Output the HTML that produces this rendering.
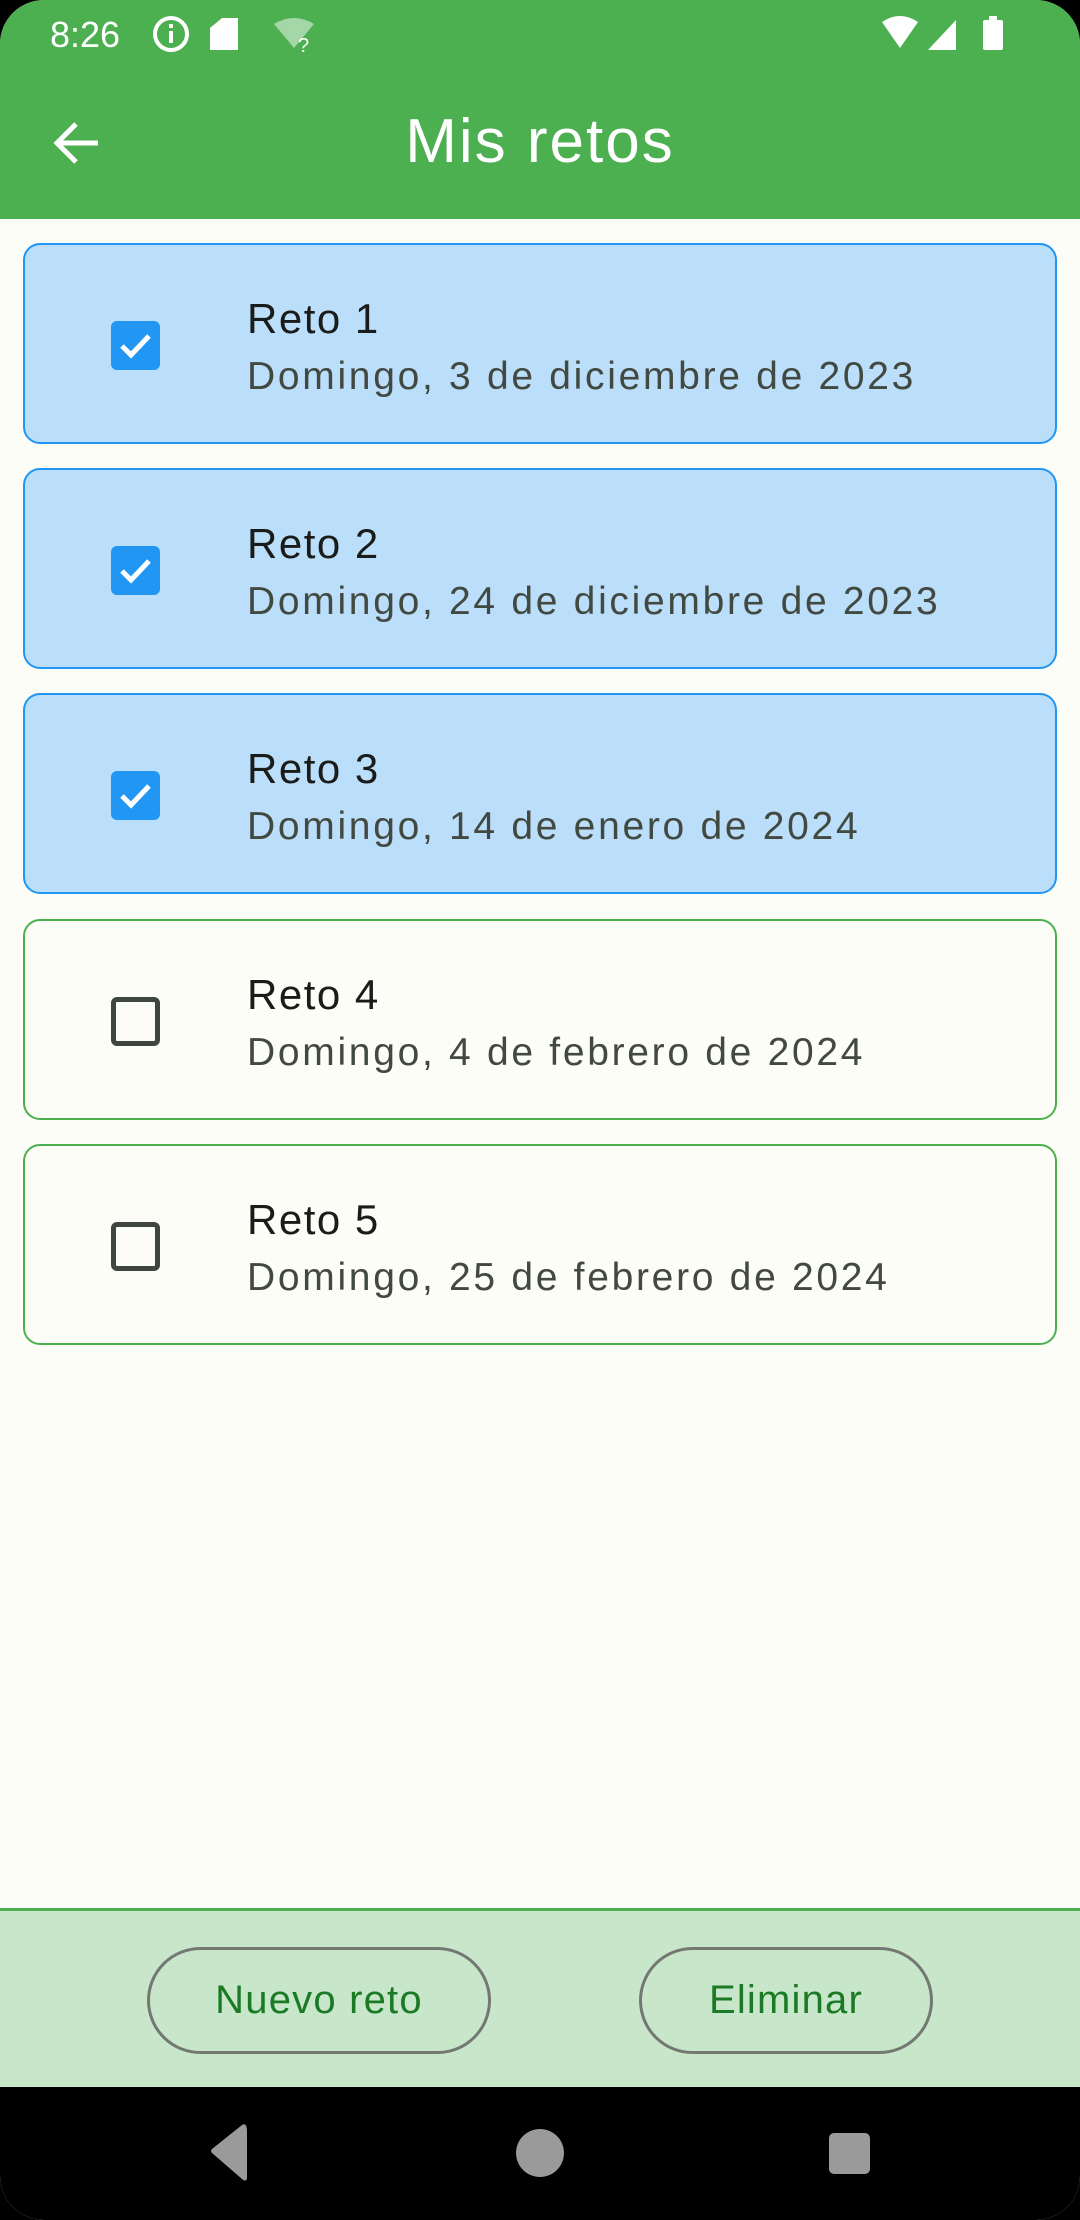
<!DOCTYPE html>
<html><head><meta charset="utf-8"><style>
*{margin:0;padding:0;box-sizing:border-box}
body{width:1080px;height:2220px;background:#000;font-family:"Liberation Sans",sans-serif;overflow:hidden;position:relative}
.screen{position:absolute;left:0;top:0;width:1080px;height:2220px;background:#fcfdf6;border-radius:44px;overflow:hidden}
.top{position:absolute;left:0;top:0;width:1080px;height:219px;background:#4caf50}
.time{position:absolute;left:50px;top:14px;color:#fff;font-size:36px}
.title{position:absolute;left:0;width:1080px;top:106px;text-align:center;color:#fff;font-size:62px;letter-spacing:2px}
.card{position:absolute;left:23px;width:1034px;height:201px;border-radius:17px;border:2px solid #4caf50;background:#fcfdf6}
.card.sel{background:#bbdefb;border-color:#2196f3}
.cb{position:absolute;left:86px;top:76px;width:49px;height:49px;border-radius:6px;border:5px solid #3f4540}
.sel .cb{background:#2196f3;border-color:#2196f3}
.t1{position:absolute;left:222px;top:50px;font-size:42px;color:#1a1c19;letter-spacing:1.5px}
.t2{position:absolute;left:222px;top:110px;font-size:39px;color:#424940;letter-spacing:2.7px}
.bottom{position:absolute;left:0;top:1908px;width:1080px;height:179px;background:#c8e6c9;border-top:3px solid #4caf50}
.btn{position:absolute;top:36px;height:107px;border:3px solid #737873;border-radius:54px;color:#1b7a26;font-size:40px;display:flex;align-items:center;justify-content:center;letter-spacing:1.2px}
.nav{position:absolute;left:0;top:2087px;width:1080px;height:133px;background:#000}
</style></head><body>
<div class="screen">
<div class="top">
 <div class="time">8:26</div>
 <svg style="position:absolute;left:150px;top:14px" width="200" height="40" viewBox="0 0 200 40">
  <circle cx="21" cy="20" r="16" fill="none" stroke="#fff" stroke-width="4"/>
  <rect x="19" y="17" width="4" height="12" fill="#fff"/><rect x="19" y="10" width="4" height="4" fill="#fff"/>
  <path d="M72 4h16v32h-28v-22z" fill="#fff"/>
  <path d="M124 10 q20-12 40 0 l-20 24z" fill="#a5d6a7"/>
  <text x="148" y="38" font-size="20" fill="#fff" font-family="Liberation Sans">?</text>
 </svg>
 <svg style="position:absolute;left:880px;top:14px" width="130" height="40" viewBox="0 0 130 40">
  <path d="M2 8 q18-12 36 0 l-18 26z" fill="#fff"/>
  <path d="M48 36 l28-30 v30z" fill="#fff"/>
  <rect x="103" y="6" width="20" height="30" rx="2" fill="#fff"/><rect x="109" y="2" width="8" height="5" fill="#fff"/>
 </svg>
 <svg style="position:absolute;left:52px;top:120px" width="50" height="46" viewBox="0 0 50 46">
  <path d="M46 23H6M24 4L5 23l19 19" fill="none" stroke="#fff" stroke-width="5"/>
 </svg>
 <div class="title">Mis retos</div>
</div>

<div class="card sel" style="top:243px"><div class="cb"><svg width="39" height="39" viewBox="0 0 39 39"><path d="M6 20l9 9 18-19" fill="none" stroke="#fff" stroke-width="5"/></svg></div><div class="t1">Reto 1</div><div class="t2">Domingo, 3 de diciembre de 2023</div></div>
<div class="card sel" style="top:468px"><div class="cb"><svg width="39" height="39" viewBox="0 0 39 39"><path d="M6 20l9 9 18-19" fill="none" stroke="#fff" stroke-width="5"/></svg></div><div class="t1">Reto 2</div><div class="t2">Domingo, 24 de diciembre de 2023</div></div>
<div class="card sel" style="top:693px"><div class="cb"><svg width="39" height="39" viewBox="0 0 39 39"><path d="M6 20l9 9 18-19" fill="none" stroke="#fff" stroke-width="5"/></svg></div><div class="t1">Reto 3</div><div class="t2">Domingo, 14 de enero de 2024</div></div>
<div class="card" style="top:919px"><div class="cb"></div><div class="t1">Reto 4</div><div class="t2">Domingo, 4 de febrero de 2024</div></div>
<div class="card" style="top:1144px"><div class="cb"></div><div class="t1">Reto 5</div><div class="t2">Domingo, 25 de febrero de 2024</div></div>

<div class="bottom">
 <div class="btn" style="left:147px;width:344px">Nuevo reto</div>
 <div class="btn" style="left:639px;width:294px">Eliminar</div>
</div>
<div class="nav">
 <svg width="1080" height="133" viewBox="0 0 1080 133">
  <path d="M247 45 v45 q0 6-5 2 l-30-26 q-2-2 0-4 l30-24 q5-3 5 7z" fill="#9a9a9a"/>
  <circle cx="540" cy="66" r="24" fill="#9a9a9a"/>
  <rect x="829" y="46" width="41" height="41" rx="5" fill="#9a9a9a"/>
 </svg>
</div>
</div>
</body></html>
